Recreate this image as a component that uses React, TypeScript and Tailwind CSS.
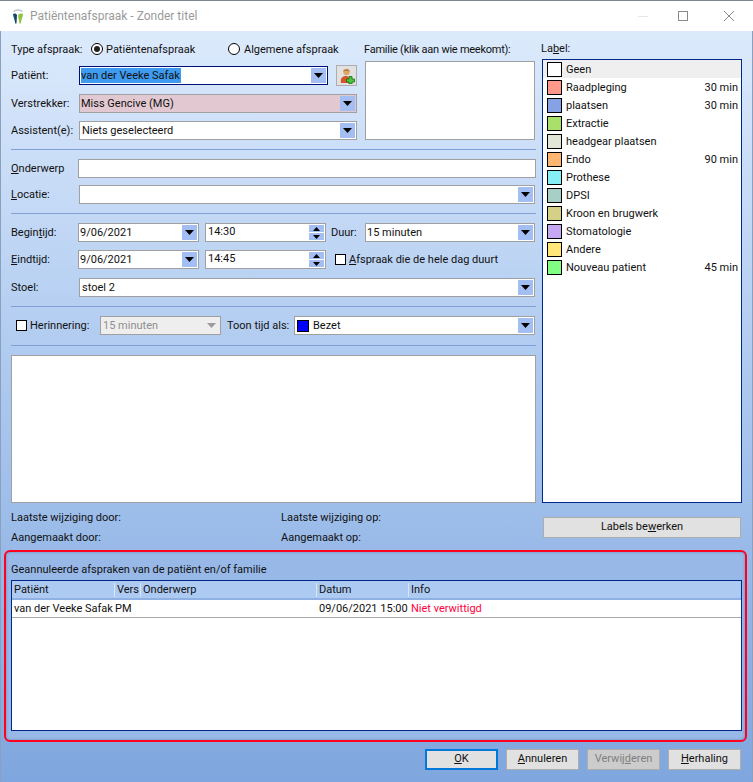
import React from "react";

const F = "font-['Roboto','Liberation_Sans',sans-serif]";

function Arrow({ disabled }: { disabled?: boolean }) {
  return (
    <svg width="9" height="5" viewBox="0 0 9 5" className="block">
      <path d="M0 0H9L4.5 5Z" fill={disabled ? "#9a9a9a" : "#000"} />
    </svg>
  );
}

function DropBtn({ disabled }: { disabled?: boolean }) {
  return (
    <div className={`w-[15px] h-[15px] flex items-center justify-center ${disabled ? "" : "bg-[#a3bef3]"}`}>
      <Arrow disabled={disabled} />
    </div>
  );
}

function Combo({
  className = "",
  children,
  disabled,
}: {
  className?: string;
  children?: React.ReactNode;
  disabled?: boolean;
}) {
  return (
    <div className={`h-[19px] flex items-center border pl-[1px] pr-[1px] text-[11px] leading-none ${className}`}>
      <div className="flex-1 min-w-0 flex items-center whitespace-nowrap">{children}</div>
      <DropBtn disabled={disabled} />
    </div>
  );
}

function Spin({ value }: { value: string }) {
  return (
    <div className="w-[121px] h-[19px] flex items-center border border-[#a0a0a0] bg-white pl-[2px] pr-[1px] text-[11px]">
      <div className="flex-1">{value}</div>
      <div className="w-[15px] flex flex-col gap-[1px]">
        <div className="h-[7px] bg-[#a3bef3] flex items-center justify-center">
          <svg width="7" height="4" viewBox="0 0 7 4"><path d="M0 4H7L3.5 0Z" fill="#000" /></svg>
        </div>
        <div className="h-[7px] bg-[#a3bef3] flex items-center justify-center">
          <svg width="7" height="4" viewBox="0 0 7 4"><path d="M0 0H7L3.5 4Z" fill="#000" /></svg>
        </div>
      </div>
    </div>
  );
}

function Label({ children, className = "" }: { children: React.ReactNode; className?: string }) {
  return <div className={`shrink-0 text-[11px] leading-none whitespace-nowrap ${className}`}>{children}</div>;
}

function Sep({ className = "" }: { className?: string }) {
  return <div className={`h-[1px] bg-[#7f9fd6] ${className}`} />;
}

function Radio({ checked }: { checked?: boolean }) {
  return (
    <div className="w-[12px] h-[12px] rounded-full border border-black bg-white flex items-center justify-center shrink-0">
      {checked && <div className="w-[6px] h-[6px] rounded-full bg-[#222]" />}
    </div>
  );
}

function Check() {
  return <div className="w-[11px] h-[11px] border border-black bg-white shrink-0" />;
}

const labels: [string, string, string][] = [
  ["Geen", "#ffffff", ""],
  ["Raadpleging", "#ff9a8a", "30 min"],
  ["plaatsen", "#84a2e4", "30 min"],
  ["Extractie", "#a8e06a", ""],
  ["headgear plaatsen", "#e2e6d6", ""],
  ["Endo", "#ffb672", "90 min"],
  ["Prothese", "#86eff5", ""],
  ["DPSI", "#a6d0c6", ""],
  ["Kroon en brugwerk", "#d4d086", ""],
  ["Stomatologie", "#c6a8f2", ""],
  ["Andere", "#ffe878", ""],
  ["Nouveau patient", "#82ff82", "45 min"],
];

function Btn({ children, className = "" }: { children: React.ReactNode; className?: string }) {
  return (
    <div className={`w-[73px] h-[21px] flex items-center justify-center text-[11px] ${className}`}>
      {children}
    </div>
  );
}

function Th({ w, children }: { w: string; children: React.ReactNode }) {
  return <div className={`${w} h-[14px] flex items-center pl-[2px] border-r border-[#d8e6fa] shrink-0`}>{children}</div>;
}

const gray = "border-[#a0a0a0]";

export default function App() {
  return (
    <div className={`w-[753px] h-[782px] flex flex-col overflow-hidden text-[#111] ${F}`}>
      <div className="h-[31px] bg-white flex items-center shrink-0 border-t border-[#7c8794]">
        <svg width="12" height="15" viewBox="0 0 12 15" className="ml-[12px] mr-[6px]">
          <path d="M1.5 2.5C4 0.5 8 0.5 10.5 2.5" stroke="#b9c2c8" strokeWidth="1.6" fill="none" />
          <path d="M1 5C2.5 4 4.5 4.5 5 6L4.5 14.5H3.2C3 11 1.4 8.5 1 5Z" fill="#14496b" />
          <path d="M6.2 6C7 4.5 9.5 4 11 5C10.8 8.5 9 11 8.8 14.5H7.4C7.4 12 6.6 10 6.2 8Z" fill="#8cc63f" />
        </svg>
        <span className="text-[12px] text-[#9b9b9b] leading-none">Patiëntenafspraak - Zonder titel</span>
        <div className="flex-1" />
        <div className="w-[10px] h-[1px] bg-[#e6e6e6] mr-[30px]" />
        <div className="w-[10px] h-[10px] border border-[#8a8a8a] mr-[36px]" />
        <svg width="10" height="10" viewBox="0 0 10 10" className="mr-[19px]">
          <path d="M0 0L10 10M10 0L0 10" stroke="#8a8a8a" strokeWidth="1" />
        </svg>
      </div>

      <div className="flex-1 flex flex-col bg-gradient-to-b from-[#dceafc] via-[#a9c6ee] to-[#7fa6de] border-l border-r border-[#8aa0bd]">
        <div className="flex h-[472px]">
          {/* left column */}
          <div className="w-[525px] ml-[10px] flex flex-col shrink-0">
            <div className="flex h-[109px]">
              <div className="w-[346px] flex flex-col shrink-0">
                <div className="h-[16px] mt-[10px] flex items-center text-[11px] leading-none whitespace-nowrap">
                  <span className="w-[80px]">Type afspraak:</span>
                  <Radio checked />
                  <span className="ml-[3px] w-[122px]">Patiëntenafspraak</span>
                  <Radio />
                  <span className="ml-[4px]">Algemene afspraak</span>
                </div>
                <div className="flex items-center mt-[9px] h-[19px]">
                  <Label className="w-[68px]">Patiënt:</Label>
                  <Combo className="w-[249px] border-[#00107a] bg-white">
                    <span className="bg-[#3f9bf0] text-[#111] h-[15px] flex items-center pr-[1px]">van der Veeke Safak</span>
                  </Combo>
                  <div className="w-[21px] h-[21px] ml-[8px] border border-[#adadad] bg-[#e1e1e1] flex items-center justify-center shrink-0">
                    <svg width="16" height="16" viewBox="0 0 16 16">
                      <circle cx="7.5" cy="4" r="3.2" fill="#e0a868" />
                      <path d="M4 3.5C4.5 1 10 0.5 11 3.5C9 2.5 6 2.5 4 3.5Z" fill="#a8763a" />
                      <path d="M2 15C1 10 3.5 8 7 8C10 8 11 10 11 15Z" fill="#d4552a" />
                      <path d="M10 8.5H13V11H15.5V14H13V16H10V14H7.5V11H10Z" fill="#49c83a" stroke="#1d6b18" strokeWidth="0.8" />
                    </svg>
                  </div>
                </div>
                <div className="flex items-center mt-[9px]">
                  <Label className="w-[68px]">Verstrekker:</Label>
                  <Combo className={`w-[278px] bg-[#e2c9d1] ${gray}`}><span>Miss Gencive (MG)</span></Combo>
                </div>
                <div className="flex items-center mt-[8px]">
                  <Label className="w-[68px]">Assistent(e):</Label>
                  <Combo className={`w-[278px] bg-white ${gray}`}><span className="ml-[1px]">Niets geselecteerd</span></Combo>
                </div>
              </div>
              <div className="flex-1 ml-[7px] flex flex-col">
                <div className="h-[16px] mt-[10px] flex items-center text-[11px] tracking-[-0.25px] leading-none whitespace-nowrap">Familie (klik aan wie meekomt):</div>
                <div className="mt-[4px] ml-[1px] w-[170px] h-[79px] bg-white border border-[#a0a0a0]" />
              </div>
            </div>

            <Sep className="mt-[9px]" />
            <div className="flex items-center mt-[9px]">
              <Label className="w-[67px]"><u>O</u>nderwerp</Label>
              <div className="w-[458px] h-[19px] bg-white border border-[#a0a0a0]" />
            </div>
            <div className="flex items-center mt-[7px]">
              <Label className="w-[68px]"><u>L</u>ocatie:</Label>
              <Combo className={`w-[456px] bg-white ${gray}`} />
            </div>
            <Sep className="mt-[9px]" />

            <div className="flex items-center mt-[9px]">
              <Label className="w-[67px]">Begin<u>t</u>ijd:</Label>
              <Combo className={`w-[121px] bg-white ${gray}`}><span>9/06/2021</span></Combo>
              <div className="ml-[6px]"><Spin value="14:30" /></div>
              <span className="ml-[5px] w-[34px] text-[11px] leading-none">Duur:</span>
              <Combo className={`w-[170px] bg-white ${gray}`}><span>15 minuten</span></Combo>
            </div>
            <div className="flex items-center mt-[8px]">
              <Label className="w-[67px]"><u>E</u>indtijd:</Label>
              <Combo className={`w-[121px] bg-white ${gray}`}><span>9/06/2021</span></Combo>
              <div className="ml-[6px]"><Spin value="14:45" /></div>
              <div className="ml-[9px]"><Check /></div>
              <span className="ml-[3px] text-[11px] leading-none whitespace-nowrap"><u>A</u>fspraak die de hele dag duurt</span>
            </div>
            <div className="flex items-center mt-[9px]">
              <Label className="w-[68px]">Stoel:</Label>
              <Combo className={`w-[456px] bg-white ${gray}`}><span className="ml-[1px]">stoel 2</span></Combo>
            </div>
            <Sep className="mt-[9px]" />

            <div className="flex items-center mt-[9px]">
              <div className="ml-[5px]"><Check /></div>
              <span className="ml-[3px] w-[70px] text-[11px] leading-none">Herinnering:</span>
              <Combo className={`w-[121px] bg-[#eeeeee] text-[#8f8f8f] ${gray}`} disabled><span className="ml-[1px]">15 minuten</span></Combo>
              <span className="ml-[6px] w-[67px] text-[11px] leading-none whitespace-nowrap">Toon tijd als:</span>
              <Combo className={`w-[241px] bg-white ${gray}`}>
                <span className="w-[12px] h-[12px] bg-[#0000ff] border border-black ml-[1px] mr-[4px]" />
                <span>Bezet</span>
              </Combo>
            </div>
            <Sep className="mt-[10px]" />
            <div className="mt-[9px] h-[148px] bg-white border border-[#a0a0a0]" />
          </div>

          {/* right column */}
          <div className="ml-[6px] w-[201px] flex flex-col shrink-0">
            <div className="h-[16px] mt-[9px] -ml-[1px] flex items-center text-[11px] leading-none">La<u>b</u>el:</div>
            <div className="mt-[3px] h-[444px] w-[200px] bg-white border border-[#00288c] flex flex-col">
              {labels.map(([name, color, dur], i) => (
                <div key={name} className={`h-[18px] flex items-center pl-[4px] pr-[3px] text-[11px] leading-none shrink-0 ${i === 0 ? "bg-[#efefef]" : ""}`}>
                  <span className="w-[15px] h-[15px] border border-black shrink-0" style={{ backgroundColor: color }} />
                  <span className="ml-[4px] flex-1 whitespace-nowrap">{name}</span>
                  <span>{dur}</span>
                </div>
              ))}
            </div>
          </div>
        </div>

        {/* meta */}
        <div className="flex mt-[4px] h-[42px]">
          <div className="ml-[10px] w-[270px] flex flex-col text-[11px] leading-none">
            <div className="h-[20px] flex items-center">Laatste wijziging door:</div>
            <div className="h-[20px] flex items-center">Aangemaakt door:</div>
          </div>
          <div className="w-[262px] flex flex-col text-[11px] leading-none">
            <div className="h-[20px] flex items-center">Laatste wijziging op:</div>
            <div className="h-[20px] flex items-center">Aangemaakt op:</div>
          </div>
          <div className="w-[198px] mt-[10px] h-[21px] flex items-center justify-center border border-[#adadad] bg-[#e1e1e1] text-[11px]">
            Labels be<u>w</u>erken
          </div>
        </div>

        {/* group */}
        <div className="mt-[1px] ml-[3px] w-[743px] h-[192px] border-[2px] border-[#ff0020] rounded-[6px] flex flex-col px-[5px] bg-[#98b9e8] shadow-[inset_0_0_3px_rgba(60,80,120,0.45)]">
          <div className="h-[16px] mt-[9px] flex items-center text-[11px] leading-none">Geannuleerde afspraken van de patiënt en/of familie</div>
          <div className="mt-[3px] w-[731px] h-[151px] bg-white border border-[#00288c] flex flex-col text-[11px] leading-none">
            <div className="h-[19px] flex items-center bg-[#adcaf2] border-b-[2px] border-[#8fb0e3] shrink-0">
              <Th w="w-[103px]">Patiënt</Th>
              <Th w="w-[26px]">Vers</Th>
              <Th w="w-[176px]">Onderwerp</Th>
              <Th w="w-[92px]">Datum</Th>
              <div className="pl-[2px]">Info</div>
            </div>
            <div className="h-[18px] flex items-center border-b border-[#a8a8a8] whitespace-nowrap shrink-0">
              <span className="w-[103px] pl-[2px] shrink-0">van der Veeke Safak</span>
              <span className="w-[26px] shrink-0">PM</span>
              <span className="w-[176px] shrink-0" />
              <span className="w-[92px] pl-[2px] shrink-0">09/06/2021 15:00</span>
              <span className="pl-[2px] text-[#ff0040]">Niet verwittigd</span>
            </div>
          </div>
        </div>

        {/* buttons */}
        <div className="flex mt-[7px] ml-[424px] gap-[8px]">
          <Btn className="border-[2px] border-[#0078d7] bg-[#e1e1e1]"><span><u>O</u>K</span></Btn>
          <Btn className="border border-[#adadad] bg-[#e1e1e1]"><span><u>A</u>nnuleren</span></Btn>
          <Btn className="border border-[#adadad] bg-[#cccccc] text-[#808080]"><span>Verwij<u>d</u>eren</span></Btn>
          <Btn className="border border-[#adadad] bg-[#e1e1e1]"><span><u>H</u>erhaling</span></Btn>
        </div>
      </div>
    </div>
  );
}
